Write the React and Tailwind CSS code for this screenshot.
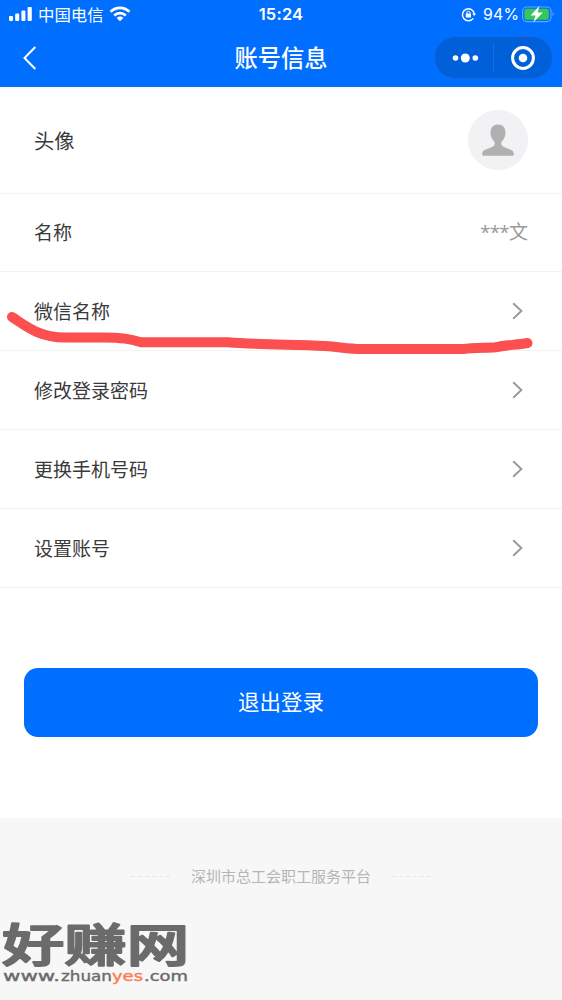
import React from 'react';

const rows = ['微信名称', '修改登录密码', '更换手机号码', '设置账号'];

function StatusBar() {
  return (
    <div className="h-7 flex items-center justify-between pl-2 pr-2 text-white relative">
      <div className="flex items-center">
        <svg width="26" height="16" viewBox="0 0 26 16" fill="#fff">
          <rect x="1" y="10" width="4" height="5" rx="1" />
          <rect x="7.2" y="7.5" width="4" height="7.5" rx="1" />
          <rect x="13.4" y="4.5" width="4" height="10.5" rx="1" />
          <rect x="19.6" y="1" width="4.2" height="14" rx="1" />
        </svg>
        <span className="ml-1 text-[16.4px] leading-6">中国电信</span>
        <svg className="ml-[5px]" width="22" height="16" viewBox="0 0 22 16" fill="none" stroke="#fff" strokeWidth="2.8">
          <path d="M1.5 5.8 C7 0.6 15 0.6 20.5 5.8" />
          <path d="M5.2 9.5 C8.5 6.4 13.5 6.4 16.8 9.5" />
          <path d="M7.6 11.9 C9.6 10 12.4 10 14.4 11.9 L11 15.3 Z" fill="#fff" stroke="none" />
        </svg>
      </div>
      <span className="absolute left-0 right-0 text-center text-[16.5px] font-semibold tracking-[0.2px] font-['Inter','Noto_Sans_CJK_SC',sans-serif]">15:24</span>
      <div className="flex items-center">
        <svg className="mt-px" width="15" height="15" viewBox="0 0 15 15" fill="none" stroke="#fff" strokeWidth="1.4">
          <path d="M12.3 11.3 A6 6 0 1 1 13.4 7" />
          <path d="M11.2 6.5 H15 L13.2 9 Z" fill="#fff" stroke="none" />
          <rect x="4.8" y="6.6" width="5.2" height="4" rx="0.6" fill="#fff" stroke="none" />
          <path d="M5.8 7 V5.8 A1.6 1.6 0 0 1 9 5.8 V7" strokeWidth="1" />
        </svg>
        <span className="mt-[2px] ml-[7px] w-[36px] whitespace-nowrap text-[15.8px] tracking-[0.2px] font-['Inter',sans-serif]">94%</span>
        <svg className="ml-[3px] -mr-px" width="33" height="18" viewBox="0 0 33 18">
          <rect x="0.6" y="2" width="28.4" height="14.6" rx="4" fill="none" stroke="#65a5f5" strokeWidth="1.1" />
          <rect x="2.4" y="3.8" width="24.4" height="11" rx="2.4" fill="#35c759" />
          <path d="M30.6 7 C32.3 7.8 32.3 10.4 30.6 11.4 Z" fill="#65a5f5" />
          <path d="M17.4 1 L8.6 10.4 H13.6 L11.4 17.2 L20.8 7.6 H15.6 Z" fill="#fff" />
        </svg>
      </div>
    </div>
  );
}

function NavBar() {
  return (
    <div className="h-[59px] relative flex items-center justify-between pl-[22px] pr-[9px] text-white">
      <svg width="16" height="26" viewBox="0 0 16 26" fill="none" stroke="#fff" strokeWidth="2">
        <path d="M13.3 2 L2.5 13 L13.3 24" />
      </svg>
      <h1 className="absolute left-0 right-0 text-center text-[23.3px] font-medium">账号信息</h1>
      <div className="relative w-[119px] h-[43px] rounded-full bg-[#0060da] border border-[#1669dd] flex items-center">
        <svg className="w-[58px]" width="58" height="20" viewBox="0 0 58 20" fill="#fff">
          <circle cx="20.5" cy="10" r="2.8" />
          <circle cx="30.3" cy="10" r="4.5" />
          <circle cx="40.3" cy="10" r="2.8" />
        </svg>
        <div className="w-px h-[27px] bg-[#1b6fe0]" />
        <svg className="ml-[16px]" width="26" height="26" viewBox="0 0 26 26">
          <circle cx="13" cy="13" r="10.4" fill="none" stroke="#fff" strokeWidth="3" />
          <circle cx="13" cy="13" r="4.3" fill="#fff" />
        </svg>
      </div>
    </div>
  );
}

function Chevron() {
  return (
    <svg className="mr-1 mb-px" width="12" height="18" viewBox="0 0 12 18" fill="none" stroke="#999" strokeWidth="1.9">
      <path d="M1.2 1.2 L9.4 9 L1.2 16.8" />
    </svg>
  );
}

function Dashes() {
  return (
    <div className="flex gap-[3px]">
      {[0, 1, 2, 3, 4, 5].map(i => (
        <span key={i} className="w-[4px] h-px bg-[#e8e8e8]" />
      ))}
    </div>
  );
}

function SiteLogo() {
  return (
    <svg className="absolute left-0 top-[900px]" width="200" height="100" viewBox="0 0 200 100" fill="#6b6b6b">
      <text x="2" y="62" fontSize="45" fontWeight="500" textLength="187" lengthAdjust="spacingAndGlyphs"
        stroke="#6b6b6b" strokeWidth="2" strokeLinejoin="round" strokeLinecap="round"
        fontFamily="'Liberation Sans', 'Noto Sans CJK SC', sans-serif">好赚网</text>
      <g fontSize="14.5" fontFamily="'DejaVu Sans', sans-serif" stroke="#6b6b6b" strokeWidth="0.4">
        <text x="3" y="81" textLength="57" lengthAdjust="spacingAndGlyphs">www.</text>
        <text x="61" y="81" textLength="51" lengthAdjust="spacingAndGlyphs">zhuan</text>
        <text x="112" y="81" textLength="31" lengthAdjust="spacingAndGlyphs" fill="#ff7a52" stroke="#ff7a52">yes</text>
        <text x="144" y="81" textLength="44" lengthAdjust="spacingAndGlyphs">.com</text>
      </g>
    </svg>
  );
}

export default function App() {
  return (
    <div className="relative w-[562px] h-[1000px] overflow-hidden flex flex-col bg-white font-['Noto_Sans_CJK_SC',sans-serif] text-[#3a3a3a]">
      <header className="bg-[#006eff] h-[87px]">
        <StatusBar />
        <NavBar />
      </header>

      <main className="h-[731px]">
        <div className="h-[107px] pl-[34px] pr-[34px] flex items-center justify-between border-b border-[#f3f3f3]">
          <span className="text-[20.3px]">头像</span>
          <div className="w-[60px] h-[60px] rounded-full bg-[#f2f2f4]">
            <svg width="60" height="60" viewBox="0 0 60 60" fill="#b0b0b0">
              <path d="M30 14.5 C25 14.5 22.3 18 22.5 23 C22.7 27 24.3 29.5 26.3 31.5 C27.2 34.5 26.8 35.6 24.5 36.8 L17.3 39.8 C15 40.9 14.2 42 14.2 44 V44.8 Q14.2 45.7 15.2 45.7 H44.8 Q45.8 45.7 45.8 44.8 V44 C45.8 42 45 40.9 42.7 39.8 L35.5 36.8 C33.2 35.6 32.8 34.5 33.7 31.5 C35.7 29.5 37.3 27 37.5 23 C37.7 18 35 14.5 30 14.5 Z" />
            </svg>
          </div>
        </div>
        <div className="h-[78px] px-[34px] flex items-center justify-between border-b border-[#f3f3f3] text-[19px]">
          <span>名称</span>
          <span className="text-[#999] font-['Open_Sans','Noto_Sans_CJK_SC',sans-serif]"><span className="tracking-[-0.8px]">***</span>文</span>
        </div>
        {rows.map(label => (
          <div key={label} className="h-[79px] px-[34px] flex items-center justify-between border-b border-[#f3f3f3] text-[19px]">
            <span>{label}</span>
            <Chevron />
          </div>
        ))}
        <div className="pt-[80px] px-6">
          <button className="w-full h-[69px] pb-[2px] rounded-[14px] bg-[#006eff] text-white text-[21.5px]">退出登录</button>
        </div>
      </main>

      <footer className="flex-1 bg-[#f7f7f7] pt-[47px]">
        <div className="flex items-center justify-center gap-[21px] text-[15px] text-[#b5b5b5]">
          <Dashes />
          <span>深圳市总工会职工服务平台</span>
          <Dashes />
        </div>
      </footer>

      {/* red marker stroke under the WeChat name row */}
      <svg className="absolute left-0 top-[300px]" width="562" height="60" viewBox="0 0 562 60" fill="none" stroke="#fc4f50" strokeWidth="10" strokeLinecap="round" strokeLinejoin="round">
        <path d="M12 17 C26 26 38 37 65 37.5 H103 C122 37.5 130 39 141 42.3 H228 C255 44.5 285 44.5 325 46 C340 47 348 49 362 49 H463 C474 47.2 485 48 496 47.2 C506 45 516 45 527.5 43" />
      </svg>
      <SiteLogo />
    </div>
  );
}
